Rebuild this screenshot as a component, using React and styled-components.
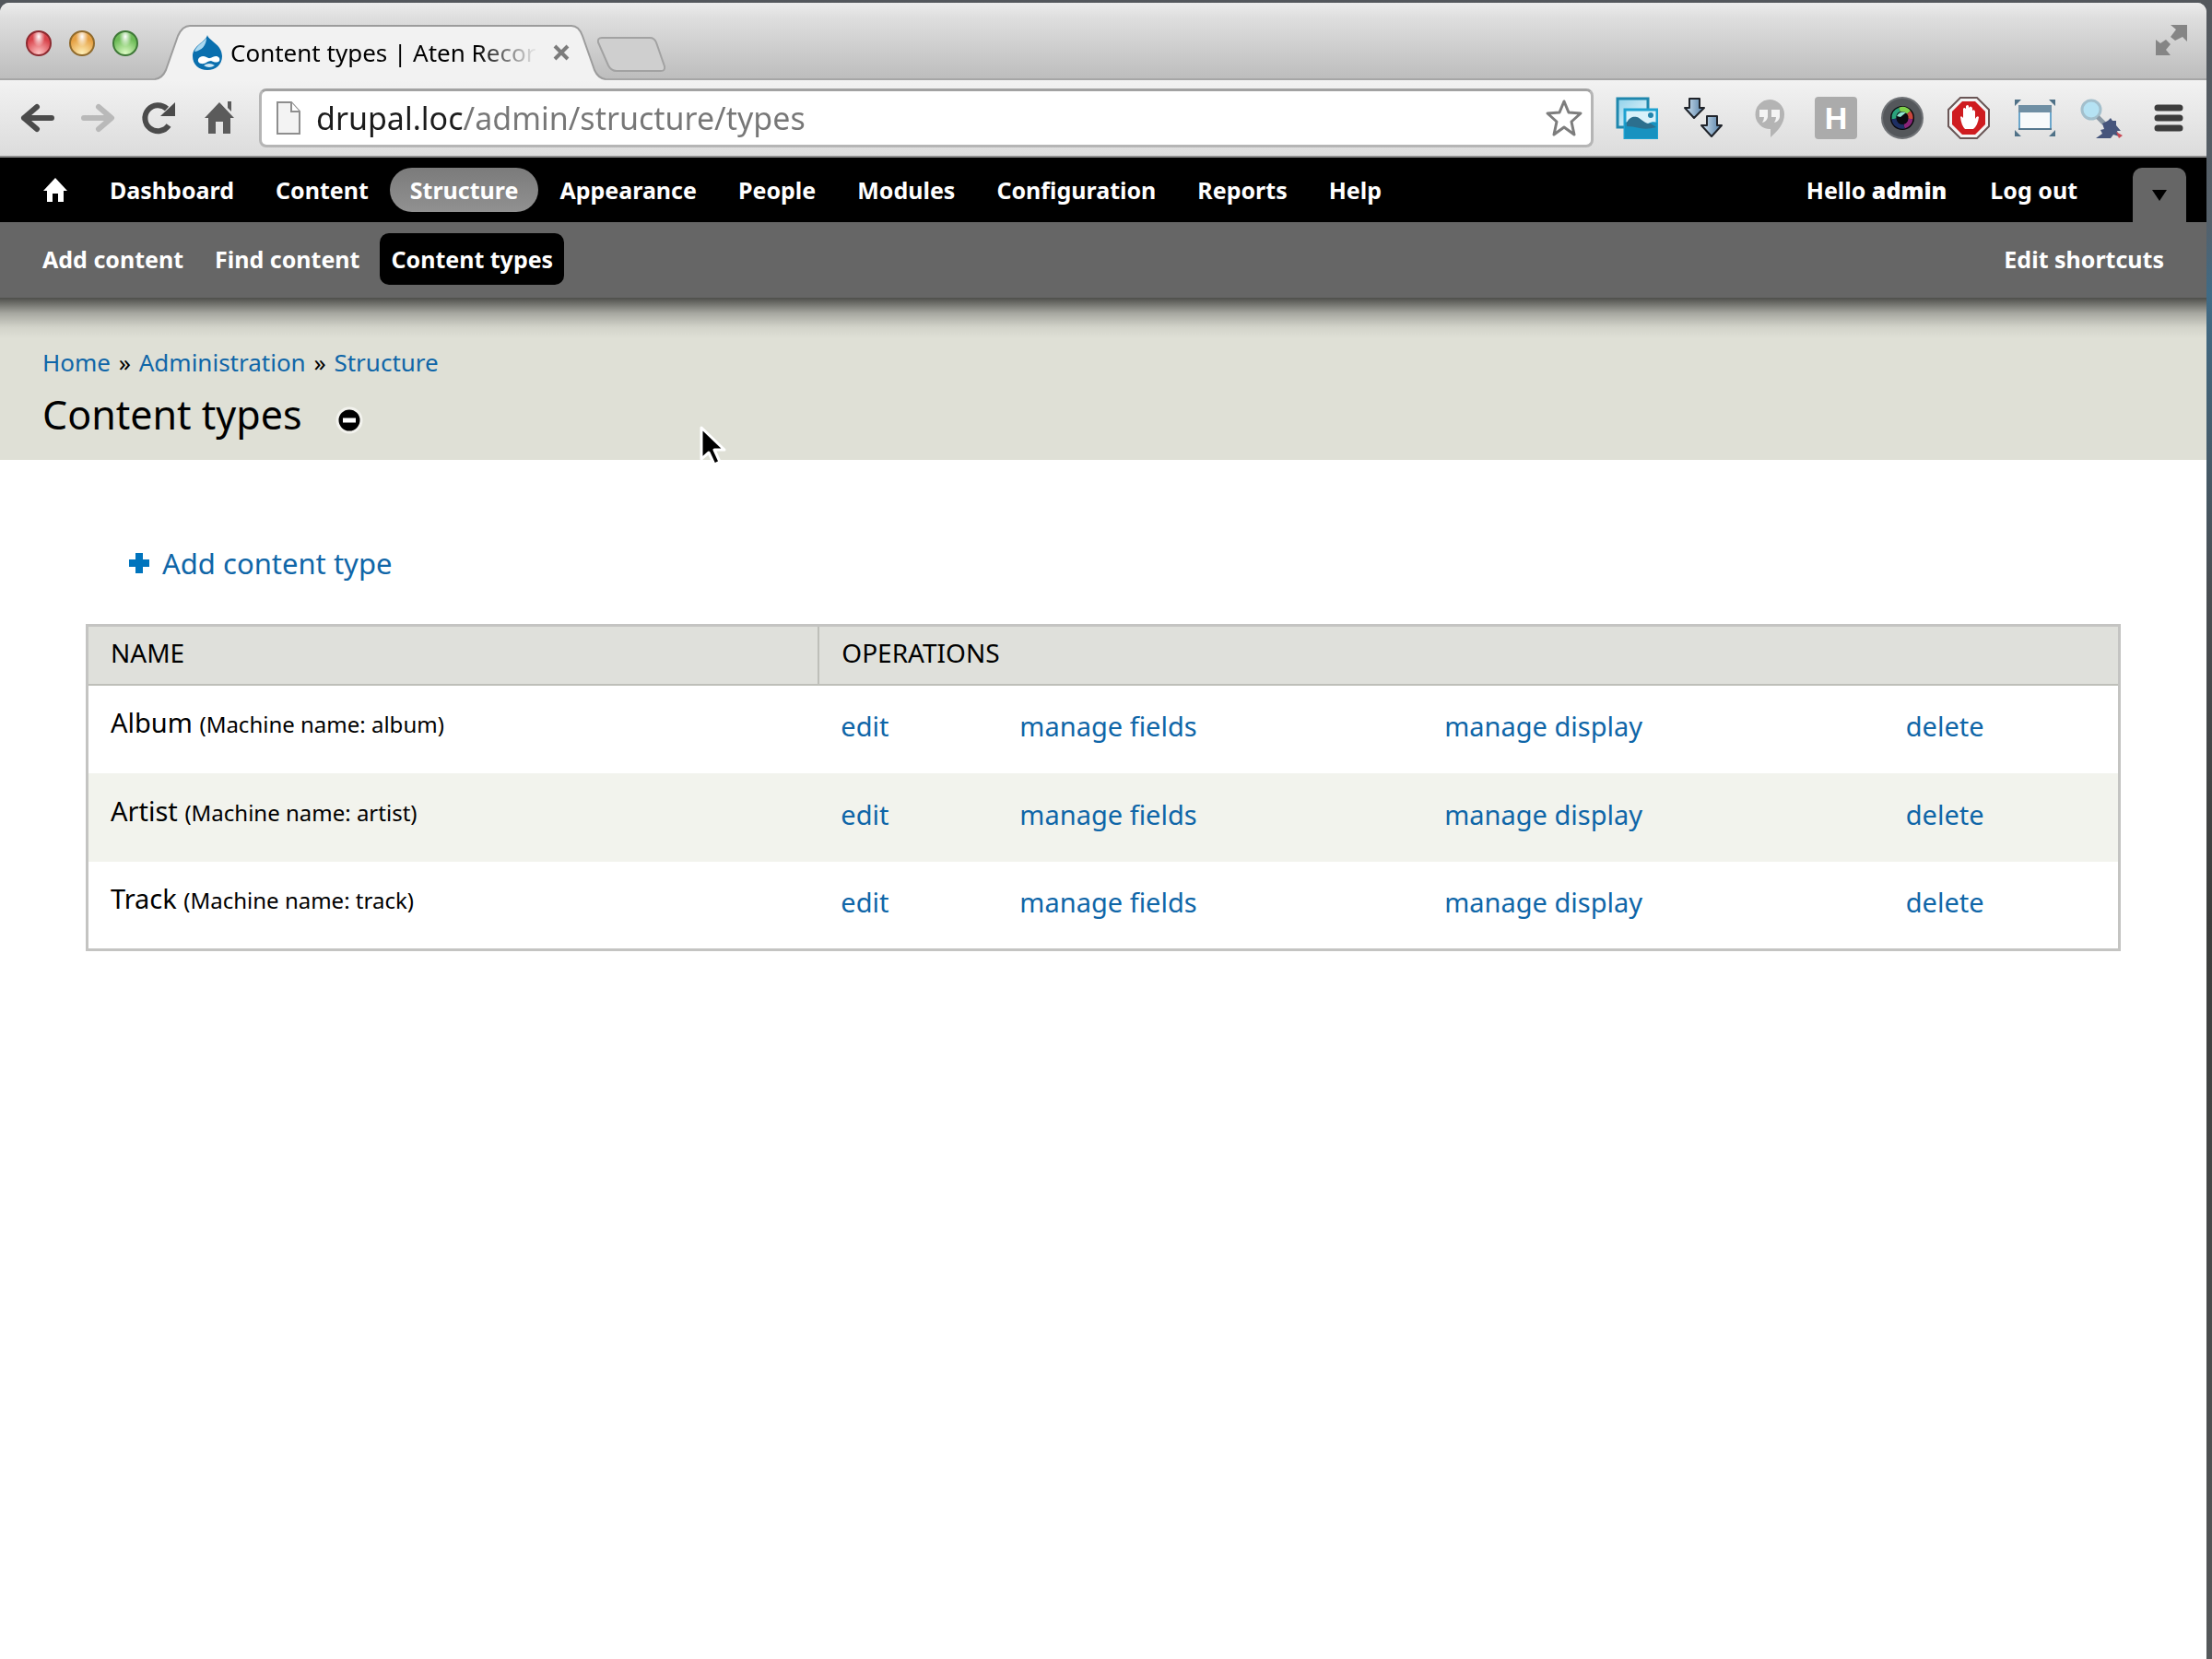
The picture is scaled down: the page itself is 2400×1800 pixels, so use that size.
import React from "react";
import styled, { createGlobalStyle } from "styled-components";

const menuLinks = [
  "Dashboard",
  "Content",
  "Structure",
  "Appearance",
  "People",
  "Modules",
  "Configuration",
  "Reports",
  "Help",
];

const shortcuts = ["Add content", "Find content", "Content types"];

const contentTypes = [
  { name: "Album", machine: "album" },
  { name: "Artist", machine: "artist" },
  { name: "Track", machine: "track" },
];

const operations = ["edit", "manage fields", "manage display", "delete"];

const App = () => {
  return (
    <Desktop>
      <GlobalStyle />
      <BrowserWindow>
        <TabStrip>
          <WindowButtons>
            <Light $edge="#8d2a30" $base="#d8434b" $glow="#ffc4c4" aria-label="Close" />
            <Light $edge="#8f6a2c" $base="#e5a043" $glow="#fff0b8" aria-label="Minimize" />
            <Light $edge="#3f7838" $base="#6dbb57" $glow="#dcfbc4" aria-label="Zoom" />
          </WindowButtons>
          <Tab>
            <TabShape />
            <DrupalIcon />
            <TabTitle>Content types | Aten Recor</TabTitle>
            <CloseTab aria-label="Close tab">
              <svg width="18" height="18" viewBox="0 0 18 18">
                <path d="M2 2L16 16M16 2L2 16" stroke="#7c7c7c" strokeWidth="4" />
              </svg>
            </CloseTab>
          </Tab>
          <NewTab aria-label="New tab">
            <svg width="76" height="40" viewBox="0 0 76 40">
              <path
                d="M6 2H58Q63 2 65 7L74 33Q75 38 70 38H22Q16 38 13 32L2 7Q1 2 6 2Z"
                fill="#cfcfcf"
                stroke="#a2a2a2"
                strokeWidth="2"
              />
            </svg>
          </NewTab>
          <FullScreen aria-label="Full screen">
            <svg width="36" height="36" viewBox="0 0 36 36" fill="#858585">
              <path d="M17 1H35V19L30 14L22 18L17 14L23 6Z" />
              <path d="M1 17L6 21L12 17L17 22L12 28L17 34H1Z" />
            </svg>
          </FullScreen>
        </TabStrip>

        <NavBar>
          <ToolButton aria-label="Back">
            <svg width="46" height="46" viewBox="0 0 46 46">
              <path d="M39 23H9M23 11L9 23L23 35" fill="none" stroke="#4b4b4b" strokeWidth="6" strokeLinecap="round" strokeLinejoin="round" />
            </svg>
          </ToolButton>
          <ToolButton aria-label="Forward">
            <svg width="46" height="46" viewBox="0 0 46 46">
              <path d="M8 23H37M24 11L38 23L24 35" fill="none" stroke="#b9b9b9" strokeWidth="6" strokeLinecap="round" strokeLinejoin="round" />
            </svg>
          </ToolButton>
          <ToolButton aria-label="Reload">
            <svg width="46" height="46" viewBox="0 0 46 46">
              <path d="M34 31A14 14 0 1 1 32 13" fill="none" stroke="#4b4b4b" strokeWidth="6" />
              <path d="M41 6V21H25Z" fill="#4b4b4b" />
            </svg>
          </ToolButton>
          <ToolButton aria-label="Home">
            <svg width="46" height="46" viewBox="0 0 46 46" fill="#5b5b5b">
              <path d="M23 6L39 23H35V40H27V27H19V40H11V23H7Z" />
              <path d="M32 5H36V16L32 12Z" />
            </svg>
          </ToolButton>
          <AddressBar>
            <svg width="28" height="38" viewBox="0 0 28 38">
              <path d="M2 2H17L26 12V36H2Z" fill="#f3f3f3" stroke="#8e8e8e" strokeWidth="2" />
              <path d="M17 2V12H26" fill="#fff" stroke="#8e8e8e" strokeWidth="2" />
            </svg>
            <Address aria-label="Address" type="text" defaultValue="drupal.loc/admin/structure/types" />
            <StarButton aria-label="Bookmark">
              <svg width="42" height="42" viewBox="0 0 42 42">
                <path
                  d="M21 3L26 15L39 16L29 25L32 39L21 31L10 39L13 25L3 16L16 15Z"
                  fill="#fff"
                  stroke="#7d7d7d"
                  strokeWidth="3"
                  strokeLinejoin="round"
                />
              </svg>
            </StarButton>
          </AddressBar>
          <Extensions>
            <ToolButton aria-label="Pictures"><PicturesIcon /></ToolButton>
            <ToolButton aria-label="Downloads"><ArrowsIcon /></ToolButton>
            <ToolButton aria-label="Hangouts"><HangoutsIcon /></ToolButton>
            <ToolButton aria-label="H"><LetterIcon>H</LetterIcon></ToolButton>
            <ToolButton aria-label="Camera"><CameraIcon /></ToolButton>
            <ToolButton aria-label="Block"><BlockIcon /></ToolButton>
            <ToolButton aria-label="Resize window"><ResizeIcon /></ToolButton>
            <ToolButton aria-label="Inspect"><InspectIcon /></ToolButton>
            <ToolButton aria-label="Menu">
              <svg width="46" height="46" viewBox="0 0 46 46">
                <path d="M12 12H36M12 23H36M12 34H36" stroke="#3c3c3c" strokeWidth="7" strokeLinecap="round" />
              </svg>
            </ToolButton>
          </Extensions>
        </NavBar>

        <AdminMenu>
          <HomeLink href="#" aria-label="Home">
            <svg width="28" height="28" viewBox="0 0 28 28">
              <path d="M14 1L27 15H23V27H17V18H11V27H5V15H1Z" fill="#fff" />
            </svg>
          </HomeLink>
          {menuLinks.map((label) => (
            <MenuLink href="#" key={label} $active={label === "Structure"}>
              {label}
            </MenuLink>
          ))}
          <UserMenu>
            <MenuLink href="#">
              Hello <strong>admin</strong>
            </MenuLink>
            <MenuLink href="#">Log out</MenuLink>
            <DrawerToggle aria-label="Hide shortcuts">
              <svg width="18" height="14" viewBox="0 0 18 14">
                <path d="M1 1H17L9 13Z" />
              </svg>
            </DrawerToggle>
          </UserMenu>
        </AdminMenu>

        <ShortcutBar>
          {shortcuts.map((label) => (
            <Shortcut href="#" key={label} $active={label === "Content types"}>
              {label}
            </Shortcut>
          ))}
          <EditShortcuts href="#">Edit shortcuts</EditShortcuts>
        </ShortcutBar>

        <Branding>
          <Breadcrumb>
            <a href="#">Home</a> <span>»</span> <a href="#">Administration</a> <span>»</span>{" "}
            <a href="#">Structure</a>
          </Breadcrumb>
          <TitleRow>
            <h1>Content types</h1>
            <RemoveShortcut aria-label="Remove from shortcuts">
              <svg width="30" height="30" viewBox="0 0 30 30">
                <circle cx="15" cy="15" r="13" fill="#000" stroke="#f3f3ee" strokeWidth="3" />
                <path d="M8 15H22" stroke="#fff" strokeWidth="5" />
              </svg>
            </RemoveShortcut>
          </TitleRow>
          <Pointer width="30" height="46" viewBox="0 0 30 46">
            <path d="M2 3V37L10 30L16 43L22 40L16 27H27Z" fill="#000" stroke="#fff" strokeWidth="3" strokeLinejoin="round" />
          </Pointer>
        </Branding>

        <Content>
          <AddLink href="#">
            <svg width="22" height="22" viewBox="0 0 22 22">
              <path d="M11 0V22M0 11H22" stroke="#0074bd" strokeWidth="8" />
            </svg>
            Add content type
          </AddLink>
          <Table>
            <colgroup>
              <Col $width="36%" />
              <Col $width="8.8%" />
              <Col $width="20.9%" />
              <Col $width="22.7%" />
              <Col $width="11.6%" />
            </colgroup>
            <thead>
              <tr>
                <th>NAME</th>
                <th colSpan={4}>OPERATIONS</th>
              </tr>
            </thead>
            <tbody>
              {contentTypes.map(({ name, machine }) => (
                <tr key={machine}>
                  <NameCell>
                    {name} <small>(Machine name: {machine})</small>
                  </NameCell>
                  {operations.map((operation) => (
                    <td key={operation}>
                      <a href="#">{operation}</a>
                    </td>
                  ))}
                </tr>
              ))}
            </tbody>
          </Table>
        </Content>
      </BrowserWindow>
    </Desktop>
  );
};

export default App;

// icons
const TabShape = () => (
  <TabOutline viewBox="0 0 490 60" preserveAspectRatio="none">
    <path
      d="M0 60V59Q8 58 12 49L25 12Q30 1 38 1H452Q460 1 464 12L477 49Q481 58 489 59V60Z"
      fill="#f2f2f2"
    />
    <path
      d="M0 59Q8 58 12 49L25 12Q30 1 38 1H452Q460 1 464 12L477 49Q481 58 489 59"
      fill="none"
      stroke="#9c9c9c"
      strokeWidth="2"
    />
  </TabOutline>
);

const DrupalIcon = () => (
  <svg width="34" height="40" viewBox="0 0 34 40">
    <path d="M17 1C18 7 33 11 33 24C33 33 26 39 17 39S1 33 1 24C1 12 15 9 17 1Z" fill="#0a6fae" />
    <path d="M16 4C13 9 5 12 3 19C11 18 16 12 16 4Z" fill="#a9d8f0" />
    <path d="M9 25C14 22 17 27 20 26S27 22 30 26C32 32 24 31 21 29C17 29 15 33 10 32C6 31 6 27 9 25Z" fill="#fff" />
    <path d="M13 34Q19 30 25 34Q19 38 13 34Z" fill="#cfe8f5" />
  </svg>
);

const PicturesIcon = () => (
  <svg width="46" height="46" viewBox="0 0 46 46">
    <defs>
      <linearGradient id="photo" x1="0" y1="0" x2="1" y2="1">
        <stop offset="0" stopColor="#8ed1ea" />
        <stop offset="1" stopColor="#f4fbfe" />
      </linearGradient>
    </defs>
    <path d="M2 2H35V33H2Z" fill="url(#photo)" stroke="#1f87ad" strokeWidth="3" />
    <path d="M10 14H45V45H10Z" fill="#d9f1fa" stroke="#1ea1d0" strokeWidth="3" />
    <path d="M10 28C15 27 17 24 21 24S29 31 35 29C39 27 42 27 45 28V45H10Z" fill="#1792c0" />
    <path d="M12 28C15 22 19 21 23 22S32 30 38 29L44 33Q34 36 26 34T12 32Z" fill="#2c6f8e" />
    <circle cx="38" cy="20" r="3" fill="#2384ad" />
  </svg>
);

const ArrowsIcon = () => (
  <svg width="46" height="46" viewBox="0 0 46 46">
    <defs>
      <linearGradient id="steel">
        <stop offset="0" stopColor="#d5e6f4" />
        <stop offset="1" stopColor="#4f7ba3" />
      </linearGradient>
    </defs>
    <g fill="url(#steel)" stroke="#20242b" strokeWidth="2" strokeLinejoin="round">
      <path d="M8 2H19V12H24L13 23L3 12H8Z" />
      <path d="M27 21H38V31H43L32 43L21 31H27Z" />
    </g>
  </svg>
);

const HangoutsIcon = () => (
  <svg width="46" height="46" viewBox="0 0 46 46">
    <path d="M23 3A16 16 0 0 1 39 19C39 29 32 37 24 44V35A16 16 0 0 1 23 3Z" fill="#b4b4b4" />
    <path d="M12 14H21V22Q20 27 15 28Q17 25 17 22H12ZM25 14H34V22Q33 27 28 28Q30 25 30 22H25Z" fill="#f4f4f4" />
  </svg>
);

const CameraIcon = () => (
  <svg width="46" height="46" viewBox="0 0 46 46">
    <circle cx="23" cy="23" r="22" fill="#54575b" stroke="#6f7276" strokeWidth="2" />
    <circle cx="23" cy="23" r="13" fill="#08080c" />
    <g fill="none" strokeWidth="5">
      <path d="M14 24A9 9 0 0 1 20 14" stroke="#2aa37c" />
      <path d="M20 14A9 9 0 0 1 30 17" stroke="#7fcf4c" />
      <path d="M30 17A9 9 0 0 1 32 24" stroke="#c9473c" />
      <path d="M32 24A9 9 0 0 1 25 32" stroke="#8a2478" />
      <path d="M25 32A9 9 0 0 1 14 24" stroke="#1d2f63" />
    </g>
    <circle cx="23" cy="24" r="6" fill="#0b0b10" />
    <path d="M17 21Q20 15 27 17L21 22Z" fill="#8fe6d0" />
  </svg>
);

const BlockIcon = () => (
  <svg width="46" height="46" viewBox="0 0 46 46">
    <path d="M14 1H32L45 14V32L32 45H14L1 32V14Z" fill="#f3f3f3" stroke="#6a5656" strokeWidth="2" />
    <path d="M16 5H30L41 16V30L30 41H16L5 30V16Z" fill="#cf1c20" />
    <path
      d="M14 22Q15 20 17 23V13Q18 11 20 13V10Q22 8 23 10V12Q25 9 27 12V15Q29 13 30 16V24Q32 20 34 22Q33 31 28 35H19Q15 31 14 22Z"
      fill="#fff"
    />
  </svg>
);

const ResizeIcon = () => (
  <svg width="46" height="46" viewBox="0 0 46 46">
    <path d="M1 3H8L1 10ZM45 3H38L45 10ZM1 43H8L1 36ZM45 43H38L45 36Z" fill="#4f7187" />
    <path d="M6 10H40V35H6Z" fill="#f7fafb" stroke="#6ba6cb" strokeWidth="2" />
    <path d="M5 9H41V17H5Z" fill="#6f8fa4" />
    <path d="M5 35H41" stroke="#55788f" strokeWidth="2" />
  </svg>
);

const InspectIcon = () => (
  <svg width="46" height="46" viewBox="0 0 46 46">
    <circle cx="12" cy="14" r="10" fill="#b5e2f3" stroke="#a3bfcc" strokeWidth="3" />
    <path d="M19 22L26 29" stroke="#8b99a5" strokeWidth="5" />
    <path d="M24 29L30 26L33 23L35 26L39 26L39 31L44 37L40 37L42 43L36 41L33 45H17L24 40L22 36L26 35Z" fill="#46557c" />
    <path d="M39 38L46 42L42 45Z" fill="#c94a55" />
  </svg>
);

const GlobalStyle = createGlobalStyle`
  * {
    box-sizing: border-box;
  }
  body {
    margin: 0;
    font-family: "Noto Sans", "Open Sans", sans-serif;
    color: #000;
  }
  a {
    color: #0f66a8;
    text-decoration: none;
  }
  button {
    padding: 0;
    border: none;
    background: none;
    font-family: inherit;
    cursor: pointer;
  }
  svg {
    display: block;
    flex-shrink: 0;
  }
`;

const Desktop = styled.div`
  min-height: 100vh;
  display: flex;
  padding: 3px 6px 0 0;
  background: linear-gradient(#53575c 0, #55606a 240px, #3f6b86 320px, #4a4e52 640px, #3b3d3c 1000px, #55585a 100%);
`;

const BrowserWindow = styled.div`
  flex: 1;
  min-width: 0;
  border-radius: 10px 10px 0 0;
  overflow: hidden;
  background: #fff;
`;

const TabStrip = styled.header`
  height: 84px;
  display: flex;
  align-items: flex-end;
  padding-left: 28px;
  background: linear-gradient(#ececec, #dedede 20%, #bdbdbd);
  border-bottom: 2px solid #a6a6a6;
`;

const WindowButtons = styled.div`
  align-self: center;
  display: flex;
  gap: 19px;
  width: 140px;
  padding-top: 6px;
`;

const Light = styled.button`
  width: 28px;
  height: 28px;
  border-radius: 50%;
  border: 2px solid ${({ $edge }) => $edge};
  background: radial-gradient(ellipse at 50% 20%, #fff 0, transparent 40%),
    radial-gradient(circle at 50% 95%, ${({ $glow }) => $glow} 0, ${({ $base }) => $base} 65%);
`;

const Tab = styled.div`
  position: relative;
  z-index: 0;
  width: 490px;
  height: 60px;
  margin-bottom: -2px;
  display: flex;
  align-items: center;
  padding: 0 40px;
  gap: 8px;
`;

const TabOutline = styled.svg`
  position: absolute;
  z-index: -1;
  inset: 0;
  width: 100%;
  height: 100%;
`;

const TabTitle = styled.span`
  flex: 1;
  min-width: 0;
  overflow: hidden;
  white-space: nowrap;
  font-size: 26px;
  line-height: 36px;
  mask-image: linear-gradient(90deg, #000 80%, transparent);
`;

const CloseTab = styled.button`
  margin-left: 8px;
`;

const NewTab = styled.button`
  margin: 0 0 6px -11px;
`;

const FullScreen = styled.button`
  align-self: center;
  margin: 0 20px 0 auto;
`;

const NavBar = styled.nav`
  height: 84px;
  display: flex;
  align-items: center;
  gap: 20px;
  padding: 0 19px 0 17px;
  background: linear-gradient(#f2f2f2, #dcdcdc);
  border-bottom: 2px solid #8c8c8c;
`;

const ToolButton = styled.button`
  width: 46px;
  height: 46px;
`;

const AddressBar = styled.div`
  flex: 1;
  height: 64px;
  display: flex;
  align-items: center;
  padding: 0 8px 0 15px;
  gap: 16px;
  background: #fff;
  border: 3px solid #b5b5b5;
  border-top-color: #a2a2a2;
  border-radius: 8px;
`;

const Address = styled.input`
  flex: 1;
  min-width: 0;
  padding: 0;
  border: none;
  outline: none;
  font-family: inherit;
  font-size: 34px;
  color: #777;
  /* host name darker than the path */
  background: linear-gradient(90deg, #1c1c1c 159px, #777 159px);
  background-clip: text;
  -webkit-text-fill-color: transparent;
`;

const StarButton = styled.button``;

const Extensions = styled.div`
  display: flex;
  gap: 26px;
  margin-left: 4px;
`;

const LetterIcon = styled.span`
  display: block;
  height: 46px;
  border-radius: 4px;
  background: #ababab;
  color: #fff;
  font-family: "Liberation Sans", sans-serif;
  font-size: 34px;
  line-height: 46px;
  font-weight: 700;
  text-align: center;
`;

const AdminMenu = styled.nav`
  height: 70px;
  display: flex;
  align-items: center;
  gap: 1px;
  padding: 0 22px 0 46px;
  background: #000;
`;

const HomeLink = styled.a`
  margin-right: 22px;
`;

const MenuLink = styled.a`
  padding: 0 22px;
  border-radius: 24px;
  background: ${({ $active }) => ($active ? "linear-gradient(#7b7b7b, #919191)" : "none")};
  color: #fff;
  font-size: 25px;
  line-height: 48px;
  font-weight: 700;
  white-space: nowrap;
`;

const UserMenu = styled.div`
  align-self: stretch;
  margin-left: auto;
  display: flex;
  align-items: center;
  gap: 3px;
`;

const DrawerToggle = styled.button`
  align-self: flex-end;
  width: 58px;
  height: 59px;
  margin-left: 35px;
  display: flex;
  align-items: center;
  justify-content: center;
  background: #666;
  border-radius: 10px 10px 0 0;
`;

const ShortcutBar = styled.nav`
  height: 82px;
  display: flex;
  align-items: center;
  gap: 10px;
  padding: 0 34px 2px;
  background: #666;
`;

const Shortcut = styled.a`
  padding: 0 12px;
  border-radius: 10px;
  background: ${({ $active }) => ($active ? "#000" : "none")};
  color: #fff;
  font-size: 25px;
  line-height: 56px;
  font-weight: 700;
`;

const EditShortcuts = styled(Shortcut)`
  margin-left: auto;
`;

const Branding = styled.header`
  position: relative;
  padding: 52px 46px 18px;
  background: linear-gradient(rgba(0, 0, 0, 0.65), rgba(0, 0, 0, 0.25) 17px, rgba(0, 0, 0, 0.06) 32px, transparent 44px) #dfe0d6;
`;

const Breadcrumb = styled.div`
  font-size: 26px;
  line-height: 36px;
  span {
    margin: 0 2px;
  }
`;

const TitleRow = styled.div`
  display: flex;
  align-items: center;
  gap: 36px;
  padding-top: 8px;
  h1 {
    margin: 0;
    font-size: 43px;
    line-height: 62px;
    font-weight: 400;
  }
`;

const RemoveShortcut = styled.button`
  padding-top: 12px;
`;

const Pointer = styled.svg`
  position: absolute;
  left: 759px;
  top: 138px;
`;

const Content = styled.main`
  padding: 90px 93px 60px;
`;

const AddLink = styled.a`
  display: flex;
  align-items: center;
  gap: 14px;
  margin: 0 0 44px 47px;
  font-size: 31px;
  line-height: 44px;
`;

const Table = styled.table`
  width: 100%;
  table-layout: fixed;
  border-collapse: collapse;
  border: 3px solid #c4c4c2;
  font-size: 29px;
  line-height: 40px;
  th,
  td {
    padding: 0 24px 6px;
    text-align: left;
  }
  th {
    height: 64px;
    background: #dfe0db;
    border: 2px solid #bebfb9;
    font-size: 28px;
    font-weight: 400;
  }
  td {
    height: 96px;
  }
  tbody tr:nth-of-type(even) {
    background: #f2f3ed;
  }
  small {
    font-size: 24px;
  }
`;

const NameCell = styled.td`
  && {
    padding-bottom: 12px;
  }
`;

const Col = styled.col`
  width: ${({ $width }) => $width};
`;
